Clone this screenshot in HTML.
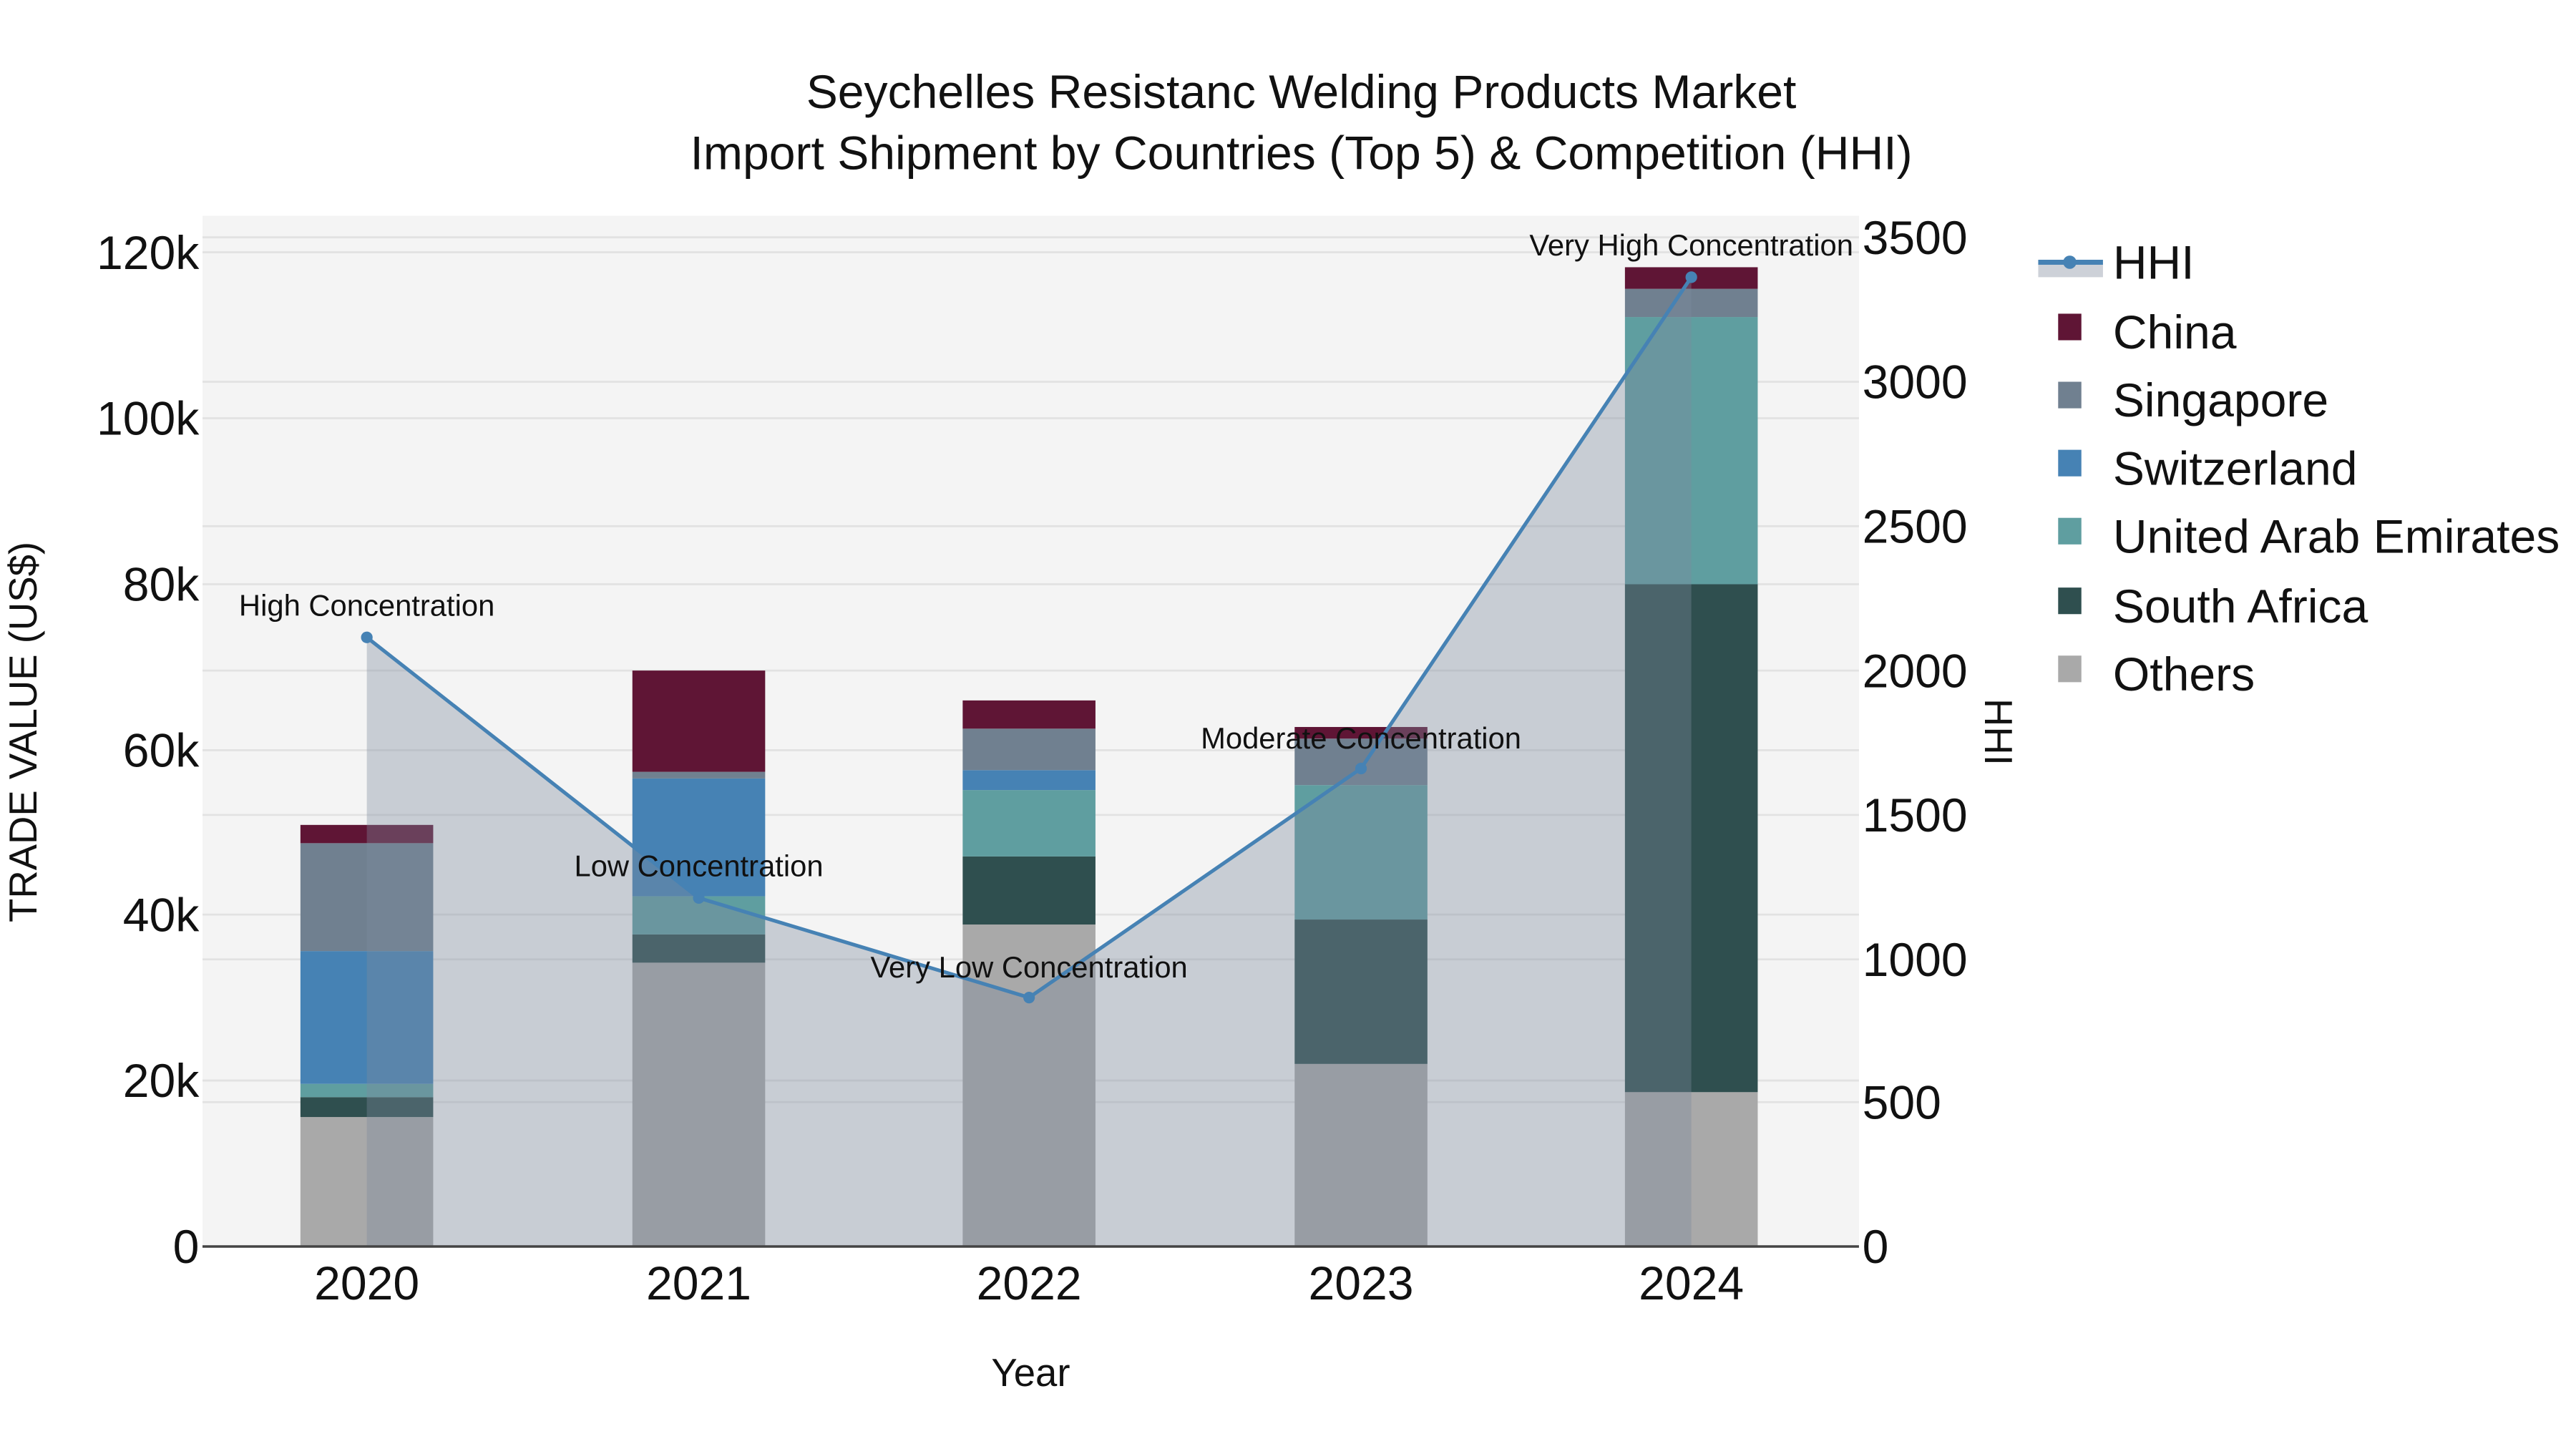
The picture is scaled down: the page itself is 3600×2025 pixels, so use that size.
<!DOCTYPE html>
<html><head><meta charset="utf-8"><style>
html,body{margin:0;padding:0;background:#fff;}
svg{display:block;}
text{font-family:"Liberation Sans",sans-serif;fill:#111;}
</style></head><body>
<svg width="3600" height="2025" viewBox="0 0 1552 873" xmlns="http://www.w3.org/2000/svg">
<rect x="0" y="0" width="1552" height="873" fill="#fff"/>
<rect x="122" y="130" width="998" height="621" fill="#f4f4f4"/>
<g stroke="#e2e2e2" stroke-width="1.2">
<line x1="122" x2="1120" y1="152" y2="152"/><line x1="122" x2="1120" y1="252" y2="252"/><line x1="122" x2="1120" y1="352" y2="352"/><line x1="122" x2="1120" y1="452" y2="452"/><line x1="122" x2="1120" y1="551" y2="551"/><line x1="122" x2="1120" y1="651" y2="651"/>
<line x1="122" x2="1120" y1="143" y2="143"/><line x1="122" x2="1120" y1="230" y2="230"/><line x1="122" x2="1120" y1="317" y2="317"/><line x1="122" x2="1120" y1="404" y2="404"/><line x1="122" x2="1120" y1="491" y2="491"/><line x1="122" x2="1120" y1="578" y2="578"/><line x1="122" x2="1120" y1="664" y2="664"/>
</g>
<g>
<rect x="181" y="673" width="80" height="78" fill="#a9a9a9"/>
<rect x="181" y="661" width="80" height="12" fill="#2f4f4f"/>
<rect x="181" y="653" width="80" height="8" fill="#5f9ea0"/>
<rect x="181" y="573" width="80" height="80" fill="#4682b4"/>
<rect x="181" y="508" width="80" height="65" fill="#708090"/>
<rect x="181" y="497" width="80" height="11" fill="#5f1535"/>

<rect x="381" y="580" width="80" height="171" fill="#a9a9a9"/>
<rect x="381" y="563" width="80" height="17" fill="#2f4f4f"/>
<rect x="381" y="540" width="80" height="23" fill="#5f9ea0"/>
<rect x="381" y="469" width="80" height="71" fill="#4682b4"/>
<rect x="381" y="465" width="80" height="4" fill="#708090"/>
<rect x="381" y="404" width="80" height="61" fill="#5f1535"/>

<rect x="580" y="557" width="80" height="194" fill="#a9a9a9"/>
<rect x="580" y="516" width="80" height="41" fill="#2f4f4f"/>
<rect x="580" y="476" width="80" height="40" fill="#5f9ea0"/>
<rect x="580" y="464" width="80" height="12" fill="#4682b4"/>
<rect x="580" y="439" width="80" height="25" fill="#708090"/>
<rect x="580" y="422" width="80" height="17" fill="#5f1535"/>

<rect x="780" y="641" width="80" height="110" fill="#a9a9a9"/>
<rect x="780" y="554" width="80" height="87" fill="#2f4f4f"/>
<rect x="780" y="473" width="80" height="81" fill="#5f9ea0"/>
<rect x="780" y="445" width="80" height="28" fill="#708090"/>
<rect x="780" y="438" width="80" height="7" fill="#5f1535"/>

<rect x="979" y="658" width="80" height="93" fill="#a9a9a9"/>
<rect x="979" y="352" width="80" height="306" fill="#2f4f4f"/>
<rect x="979" y="191" width="80" height="161" fill="#5f9ea0"/>
<rect x="979" y="174" width="80" height="17" fill="#708090"/>
<rect x="979" y="161" width="80" height="13" fill="#5f1535"/>
</g>
<polygon points="221,751 221,384 421,541 620,601 820,463 1019,167 1019,751" fill="rgba(126,137,156,0.37)"/>
<polyline points="221,384 421,541 620,601 820,463 1019,167" fill="none" stroke="#4682b4" stroke-width="2.2"/>
<g fill="#4682b4"><circle cx="221" cy="384" r="3.5"/><circle cx="421" cy="541" r="3.5"/><circle cx="620" cy="601" r="3.5"/><circle cx="820" cy="463" r="3.5"/><circle cx="1019" cy="167" r="3.5"/></g>
<line x1="122" x2="1120" y1="751" y2="751" stroke="#444" stroke-width="1.5"/>
<g font-size="18" text-anchor="middle">
<text x="221" y="371">High Concentration</text>
<text x="421" y="528">Low Concentration</text>
<text x="620" y="589">Very Low Concentration</text>
<text x="820" y="451">Moderate Concentration</text>
<text x="1019" y="154">Very High Concentration</text>
</g>
<g font-size="28.5" text-anchor="middle">
<text x="784" y="65">Seychelles Resistanc Welding Products Market</text>
<text x="784" y="102">Import Shipment by Countries (Top 5) &amp; Competition (HHI)</text>
</g>
<g font-size="28.5" text-anchor="end">
<text x="120" y="162">120k</text><text x="120" y="262">100k</text><text x="120" y="362">80k</text><text x="120" y="462">60k</text><text x="120" y="561">40k</text><text x="120" y="661">20k</text><text x="120" y="761">0</text>
</g>
<g font-size="28.5" text-anchor="start">
<text x="1122" y="153">3500</text><text x="1122" y="240">3000</text><text x="1122" y="327">2500</text><text x="1122" y="414">2000</text><text x="1122" y="501">1500</text><text x="1122" y="588">1000</text><text x="1122" y="674">500</text><text x="1122" y="761">0</text>
</g>
<g font-size="28.5" text-anchor="middle">
<text x="221" y="783">2020</text><text x="421" y="783">2021</text><text x="620" y="783">2022</text><text x="820" y="783">2023</text><text x="1019" y="783">2024</text>
</g>
<text x="621" y="835" font-size="23.5" text-anchor="middle">Year</text>
<text transform="translate(22,441) rotate(-90)" font-size="23.5" text-anchor="middle">TRADE VALUE (US$)</text>
<text transform="translate(1196,441) rotate(90)" font-size="23.5" text-anchor="middle">HHI</text>
<rect x="1228" y="158" width="39" height="9" fill="#cdd1d8"/>
<line x1="1228" x2="1267" y1="158" y2="158" stroke="#4682b4" stroke-width="3"/>
<circle cx="1247" cy="158" r="4" fill="#4682b4"/>
<g font-size="28.5">
<text x="1273" y="168">HHI</text>
<text x="1273" y="210">China</text>
<text x="1273" y="251">Singapore</text>
<text x="1273" y="292">Switzerland</text>
<text x="1273" y="333">United Arab Emirates</text>
<text x="1273" y="375">South Africa</text>
<text x="1273" y="416">Others</text>
</g>
<rect x="1240" y="189" width="14" height="16" fill="#5f1535"/>
<rect x="1240" y="230" width="14" height="16" fill="#708090"/>
<rect x="1240" y="271" width="14" height="16" fill="#4682b4"/>
<rect x="1240" y="312" width="14" height="16" fill="#5f9ea0"/>
<rect x="1240" y="354" width="14" height="16" fill="#2f4f4f"/>
<rect x="1240" y="395" width="14" height="16" fill="#a9a9a9"/>
</svg>
</body></html>
